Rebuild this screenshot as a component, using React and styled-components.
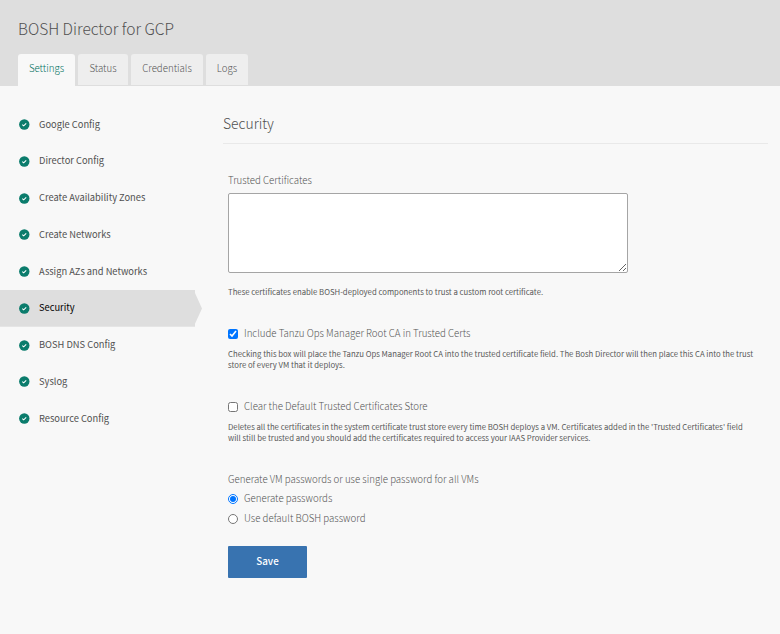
import React from 'react';
import styled, { createGlobalStyle } from 'styled-components';

const GlobalStyle = createGlobalStyle`
  *, *::before, *::after { box-sizing: border-box; }
  body {
    margin: 0;
    min-height: 100vh;
    background: #f8f8f8;
    color: #565656;
    font: 300 9.7px/12px "Noto Sans CJK SC", "Noto Sans", sans-serif;
  }
`;

const Header = styled.header`
  display: flex;
  flex-direction: column;
  justify-content: space-between;
  height: 86px;
  padding: 16px 18px 0;
  background: #dedede;
`;

const AppTitle = styled.h1`
  margin: 0;
  color: #505050;
  font-size: 15.5px;
  font-weight: 300;
  line-height: 24px;
`;

const Tabs = styled.nav`
  display: flex;
  gap: 3px;
`;

const Tab = styled.a`
  height: 32px;
  width: ${(p) => p.$width}px;
  border-radius: 3px 3px 0 0;
  border-bottom: 1px solid ${(p) => (p.$active ? '#f8f8f8' : '#dedede')};
  background: ${(p) => (p.$active ? '#f8f8f8' : '#eeeeee')};
  color: ${(p) => (p.$active ? '#00705e' : '#565656')};
  text-align: center;
  line-height: 29px;
`;

const Body = styled.div`
  display: flex;
`;

const Sidebar = styled.nav`
  flex: none;
  width: 202px;
  padding-top: 20.3px;
`;

const NavItem = styled.a`
  display: flex;
  align-items: center;
  gap: 9px;
  height: 36.75px;
  padding: 0 0 2px 19px;
  color: ${(p) => (p.$active ? '#000' : '#505050')};
  background: ${(p) => (p.$active ? '#dedede' : 'none')};
  clip-path: ${(p) =>
    p.$active ? 'polygon(0 0, 195px 0, 195px 3px, 100% 50%, 195px calc(100% - 3px), 195px 100%, 0 100%)' : 'none'};
  font-size: 9.32px;
  font-weight: 400;
`;

const CheckSvg = styled.svg`
  flex: none;
  width: 11px;
  height: 11px;
  margin-top: 2px;
`;

const Main = styled.main`
  flex: none;
  width: 545px;
  margin-left: 21px;
  padding-top: 25px;
`;

const SectionTitle = styled.h2`
  margin: 0;
  height: 33px;
  border-bottom: 1px solid #e9e9e9;
  color: #505050;
  font-size: 13.9px;
  font-weight: 300;
  line-height: 24px;
`;

const Form = styled.form`
  display: flex;
  flex-direction: column;
  align-items: flex-start;
  padding: 30px 0 0 5px;
`;

const Label = styled.label`
  display: flex;
  align-items: flex-start;
  gap: 6px;
  height: 14px;
  margin-top: ${(p) => p.$top || 0}px;
`;

const Certificates = styled.textarea`
  display: block;
  width: 400px;
  height: 80px;
  margin: 5px 0 0;
  border: 1px solid #a5a5a5;
  border-radius: 2px;
  background: #fff;
`;

const Help = styled.p`
  margin: ${(p) => p.$top}px 0 0;
  color: #585858;
  font-size: 7.76px;
  font-weight: 400;
  line-height: 11px;
  white-space: pre-line;
`;

const Choice = styled.input`
  flex: none;
  width: 10px;
  height: 10px;
  margin: 2px 0 0;
  accent-color: #0075ff;
`;

const SaveButton = styled.button`
  width: 79px;
  height: 32px;
  margin-top: 20px;
  padding: 0 0 2px;
  border: 0;
  border-radius: 1px;
  background: #3873b0;
  color: #fff;
  font: 500 9.8px/14px "Noto Sans CJK SC", "Noto Sans", sans-serif;
`;

const CheckIcon = () => (
  <CheckSvg viewBox="0 0 11 11">
    <circle cx="5.3" cy="5.5" r="5.2" fill="#0b7c6c" />
    <path d="M3.3 5.6 4.7 6.8 7.2 4.4" fill="none" stroke="#fff" strokeWidth="1.1" />
  </CheckSvg>
);

const tabs = [
  ['Settings', 57],
  ['Status', 50],
  ['Credentials', 72],
  ['Logs', 42],
];

const sections = [
  'Google Config',
  'Director Config',
  'Create Availability Zones',
  'Create Networks',
  'Assign AZs and Networks',
  'Security',
  'BOSH DNS Config',
  'Syslog',
  'Resource Config',
];

export default function App() {
  return (
    <>
      <GlobalStyle />
      <Header>
        <AppTitle>BOSH Director for GCP</AppTitle>
        <Tabs>
          {tabs.map(([name, width], i) => (
            <Tab key={name} $width={width} $active={i === 0}>{name}</Tab>
          ))}
        </Tabs>
      </Header>
      <Body>
        <Sidebar>
          {sections.map((name) => (
            <NavItem key={name} $active={name === 'Security'}>
              <CheckIcon />
              {name}
            </NavItem>
          ))}
        </Sidebar>
        <Main>
          <SectionTitle>Security</SectionTitle>
          <Form>
            <Label htmlFor="certs">Trusted Certificates</Label>
            <Certificates id="certs" />
            <Help $top={13}>
              These certificates enable BOSH-deployed components to trust a custom root certificate.
            </Help>
            <Label $top={30}>
              <Choice type="checkbox" defaultChecked />
              Include Tanzu Ops Manager Root CA in Trusted Certs
            </Label>
            <Help $top={7}>
              {'Checking this box will place the Tanzu Ops Manager Root CA into the trusted certificate field. The Bosh Director will then place this CA into the trust\nstore of every VM that it deploys.'}
            </Help>
            <Label $top={30}>
              <Choice type="checkbox" />
              Clear the Default Trusted Certificates Store
            </Label>
            <Help $top={7}>
              {"Deletes all the certificates in the system certificate trust store every time BOSH deploys a VM. Certificates added in the 'Trusted Certificates' field\nwill still be trusted and you should add the certificates required to access your IAAS Provider services."}
            </Help>
            <Label as="div" $top={30}>Generate VM passwords or use single password for all VMs</Label>
            <Label $top={5}>
              <Choice type="radio" name="password" defaultChecked />
              Generate passwords
            </Label>
            <Label $top={6}>
              <Choice type="radio" name="password" />
              Use default BOSH password
            </Label>
            <SaveButton type="button">Save</SaveButton>
          </Form>
        </Main>
      </Body>
    </>
  );
}
